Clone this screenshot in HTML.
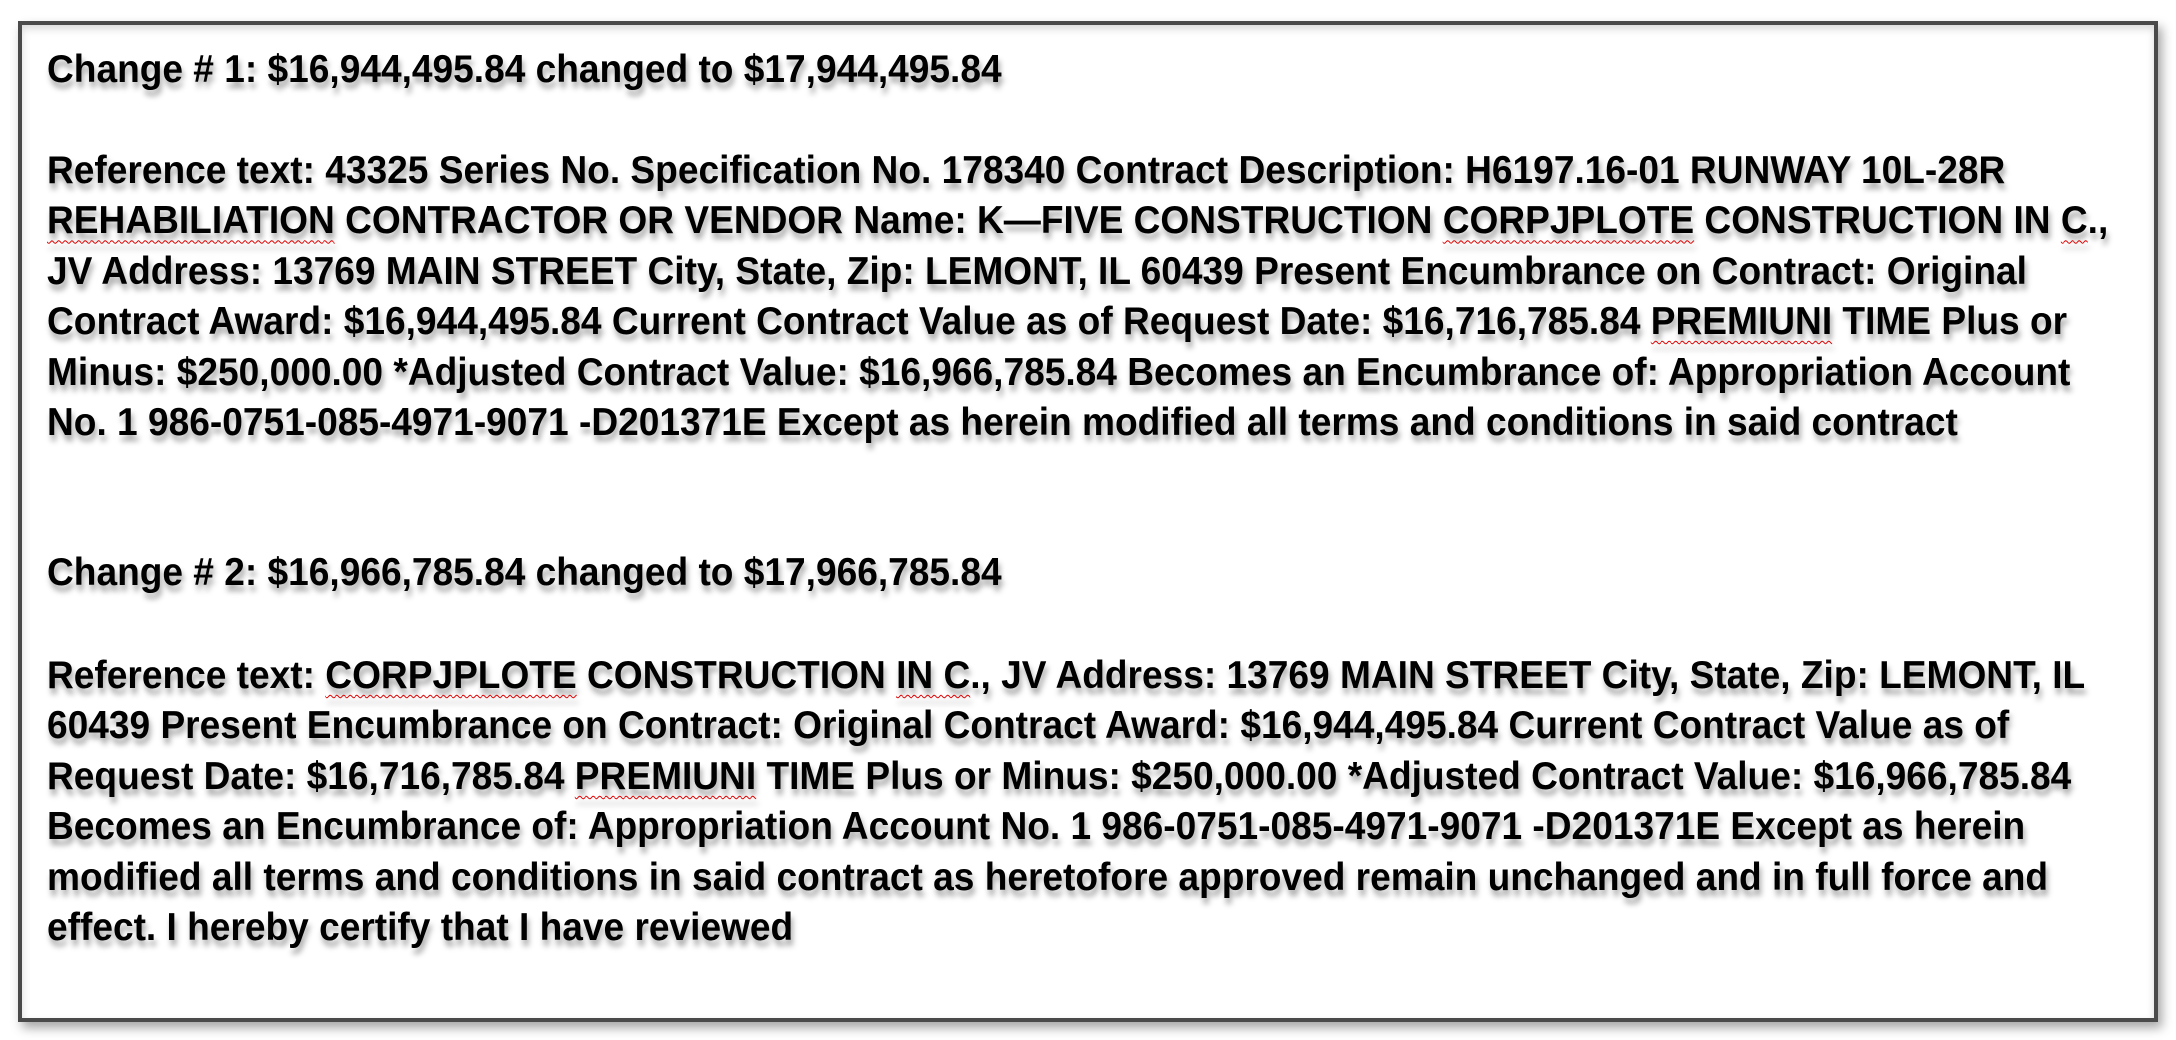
<!DOCTYPE html>
<html><head><meta charset="utf-8"><style>
html,body{margin:0;padding:0;background:#fff;width:2176px;height:1040px;overflow:hidden}
.box{position:absolute;left:18px;top:21px;width:2132px;height:993px;border:4px solid #4a4a4a;box-shadow:4px 6px 10px rgba(0,0,0,.35), inset 0 4px 8px rgba(0,0,0,.15);background:#fff}
.t{position:absolute;left:47px;font-family:"Liberation Sans",Arial,sans-serif;font-weight:bold;font-size:39px;line-height:50.4px;color:#000;white-space:nowrap;text-shadow:2px 6px 6px rgba(0,0,0,.35);transform-origin:0 0;transform:scaleX(0.951)}
.s{text-decoration:underline wavy #d00;text-decoration-thickness:1px;text-underline-offset:6px}
</style></head><body>
<div class="box"></div>
<div class="t" style="top:45px">Change # 1: $16,944,495.84 changed to $17,944,495.84</div>
<div class="t" style="top:146px">Reference text: 43325 Series No. Specification No. 178340 Contract Description: H6197.16-01 RUNWAY 10L-28R<br><span class="s">REHABILIATION</span> CONTRACTOR OR VENDOR Name: K—FIVE CONSTRUCTION <span class="s">CORPJPLOTE</span> CONSTRUCTION IN <span class="s">C</span>.,<br>JV Address: 13769 MAIN STREET City, State, Zip: LEMONT, IL 60439 Present Encumbrance on Contract: Original<br>Contract Award: $16,944,495.84 Current Contract Value as of Request Date: $16,716,785.84 <span class="s">PREMIUNI</span> TIME Plus or<br>Minus: $250,000.00 *Adjusted Contract Value: $16,966,785.84 Becomes an Encumbrance of: Appropriation Account<br>No. 1 986-0751-085-4971-9071 -D201371E Except as herein modified all terms and conditions in said contract</div>
<div class="t" style="top:548px">Change # 2: $16,966,785.84 changed to $17,966,785.84</div>
<div class="t" style="top:651px">Reference text: <span class="s">CORPJPLOTE</span> CONSTRUCTION <span class="s">IN C</span>., JV Address: 13769 MAIN STREET City, State, Zip: LEMONT, IL<br>60439 Present Encumbrance on Contract: Original Contract Award: $16,944,495.84 Current Contract Value as of<br>Request Date: $16,716,785.84 <span class="s">PREMIUNI</span> TIME Plus or Minus: $250,000.00 *Adjusted Contract Value: $16,966,785.84<br>Becomes an Encumbrance of: Appropriation Account No. 1 986-0751-085-4971-9071 -D201371E Except as herein<br>modified all terms and conditions in said contract as heretofore approved remain unchanged and in full force and<br>effect. I hereby certify that I have reviewed</div>
</body></html>
